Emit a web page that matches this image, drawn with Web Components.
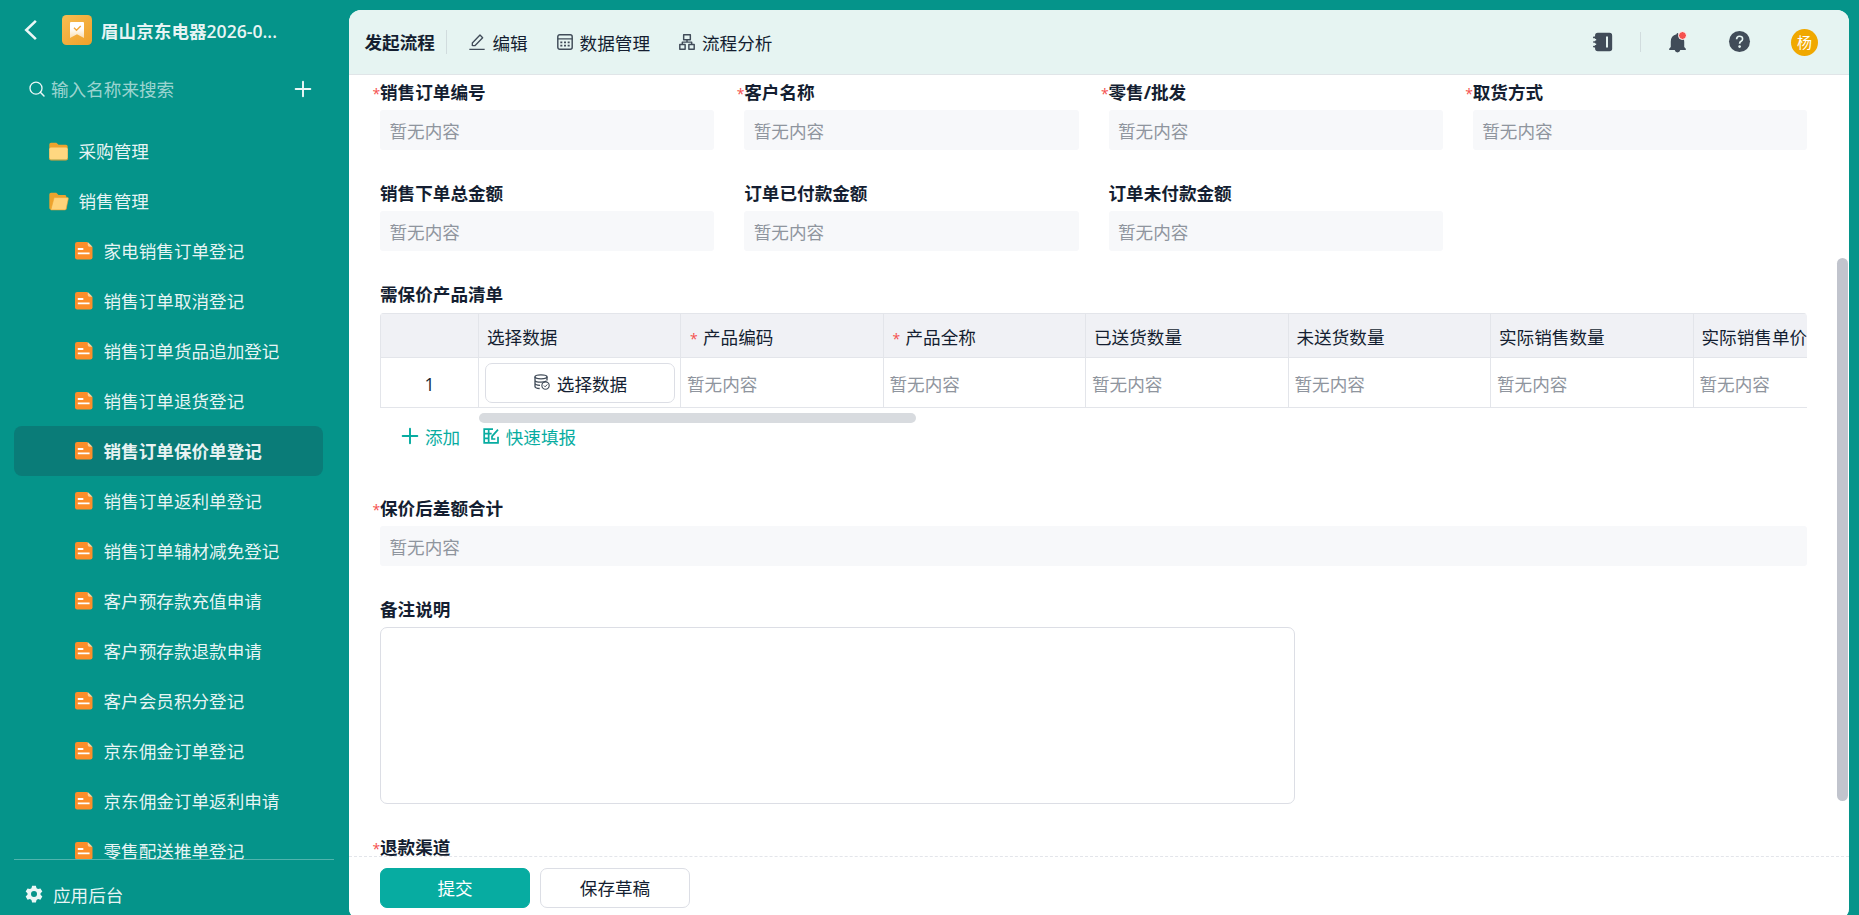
<!DOCTYPE html>
<html lang="zh-CN">
<head>
<meta charset="UTF-8">
<title>销售订单保价单登记</title>
<style>
  html, body { margin: 0; height: 100%; overflow: hidden; }
  body {
    background: #05948a;
    color: #141e31;
    font: 17.6px/24px "Open Sans", "Noto Sans CJK SC", sans-serif;
  }
</style>
</head>
<body>
<app-shell>
  <side-bar slot="side"></side-bar>
  <top-bar slot="top"></top-bar>
  <form-view slot="content"></form-view>
  <form-actions slot="footer"></form-actions>
</app-shell>

<script>
const ICONS = {
  back: `<path d="M19.500 2 9 12l10.500 10" fill="none" stroke="currentColor" stroke-width="2.8"/>`,
  app: `<defs><linearGradient id="g" x1="0" y1="0" x2="1" y2="1"><stop stop-color="#f8bd51"/><stop offset="1" stop-color="#efa02a"/></linearGradient><linearGradient id="w" x1="0" y1="0" x2="0" y2="1"><stop offset=".4" stop-color="#fff"/><stop offset="1" stop-color="#fff" stop-opacity=".6"/></linearGradient></defs>
    <rect width="24" height="24" rx="3.6" fill="url(#g)"/><path d="M7.2 5.6h9.6q.8 0 .8.8v12l-5.6-3-5.6 3v-12q0-.8.8-.8z" fill="url(#w)"/><path d="m9.6 10.2 2 2 3.4-3.4" fill="none" stroke="#f2a83a" stroke-width="1.1"/>`,
  search: `<circle cx="10.5" cy="10.7" r="9" fill="none" stroke="currentColor" stroke-width="2"/><path d="m17 17 5.5 5.5" stroke="currentColor" stroke-width="2.2" stroke-linecap="round"/>`,
  plus: `<path d="M12 1v22M1 12h22" fill="none" stroke="currentColor" stroke-width="2.9" stroke-linecap="round"/>`,
  folder: `<path d="M1.500 4Q1.500 2 3.500 2h6l2.600 2.200h8.400Q22.500 4.200 22.500 6.500V19h-21z" fill="#eda32e"/><rect x="1.500" y="7.500" width="21" height="14" rx="1.800" fill="#ffd780"/><path d="M1.500 19.500q0 2.300 2 2.300h17q2 0 2-2.300" fill="none" stroke="#eda32e" stroke-width="1"/>`,
  folderOpen: `<path d="M1.500 4Q1.500 2 3.500 2h6l2.500 2.600h7.500Q21 4.600 21 6.500V21H3Q1.500 21 1.500 19.500z" fill="#eda32e"/><path d="M7 7.500h15.200q1.300 0 1 1.300l-2.400 11.500q-.3 1.300-1.600 1.300H3.200z" fill="#ffd37a" stroke="#eda32e" stroke-width=".7"/>`,
  file: `<path d="M3 0h13.500L24 7.500V21q0 3-3 3H3q-3 0-3-3V3Q0 0 3 0z" fill="#fc8e2a"/><path d="M17.500 0 24 6.500h-4q-2.500 0-2.500-2.500z" fill="#ffcf96"/><path d="M3.800 9.600h7.600M3.800 15.600h16.200" stroke="#fff" stroke-width="2.700"/>`,
  gear: `<path fill-rule="evenodd" d="M9.500 1h5l.9 3.300 2 1.100 3.200-.9 2.500 4.300-2.400 2.300v2l2.400 2.300-2.500 4.300-3.200-.9-2 1.100-.9 3.300h-5l-.9-3.300-2-1.100-3.200.9L.9 15.400l2.400-2.300v-2L.9 8.800l2.500-4.300 3.200.9 2-1.100zM12 8a4 4 0 1 0 0 8 4 4 0 0 0 0-8z" fill="currentColor"/>`,
  edit: `<path d="M5 18v-4.500L16.500 1.500l4 4L8.800 17.500H5M.5 23h23" fill="none" stroke="currentColor" stroke-width="2" stroke-linejoin="round"/>`,
  table: `<rect x="1.200" y="1.200" width="21.600" height="21.600" rx="3" fill="none" stroke="currentColor" stroke-width="2.200"/><path d="M1 7.300h22" stroke="currentColor" stroke-width="2"/><path d="M5 12.500h3m2.500 0h3m2.500 0h3M5 17.500h3m2.500 0h3m2.500 0h3" stroke="currentColor" stroke-width="2.500"/>`,
  flow: `<path d="M7 1.200h10v7.300H7zM1.200 15.700h8v7.100h-8zM14.800 15.700h8v7.100h-8zM12 8.500v3.700M5 15.700v-3.500h14v3.500" fill="none" stroke="currentColor" stroke-width="2.200" stroke-linejoin="round"/>`,
  notebook: `<rect x="2.500" y="1" width="20.500" height="22" rx="3.200" fill="currentColor"/><path d="M0 9.200h3.800M0 14.800h3.800" stroke="#e6f4f2" stroke-width="1.800"/><path d="M1 6.500h4M1 12h4M1 17.500h4" stroke="currentColor" stroke-width="2" stroke-linecap="round"/><path d="M16.800 5.500v13" stroke="#e6f4f2" stroke-width="2.400"/>`,
  bell: `<path d="M12 0q1 0 1.200 1.600Q20.500 3 20.500 11v6.800L22.500 20v1.500h-21V20l2-2.200V11Q3.500 3 10.800 1.600 11 0 12 0zM8.500 21.500h7Q15 24.500 12 24.500t-3.500-3z" fill="currentColor"/>`,
  help: `<circle cx="12" cy="12" r="12" fill="currentColor"/><path d="M8.700 9.500q0-3.500 3.400-3.500t3.400 3q0 1.700-1.700 2.700-1.700 1-1.700 2.800" fill="none" stroke="#e6f4f2" stroke-width="1.900"/><circle cx="12.100" cy="17.800" r="1.500" fill="#e6f4f2"/>`,
  database: `<ellipse cx="10.500" cy="4.200" rx="9" ry="3" fill="none" stroke="currentColor" stroke-width="2"/><path d="M1.500 4.200v14.500q0 2.600 7 3.100M19.500 4.200v5.500M1.500 9.200q0 2.800 9 3 5 0 8-1.500M1.500 14q0 2.600 7.500 3" fill="none" stroke="currentColor" stroke-width="2"/><circle cx="17.300" cy="17.300" r="5.500" fill="none" stroke="currentColor" stroke-width="1.700"/><path d="m14.800 17.300 1.900 1.900 3.300-3.500" fill="none" stroke="currentColor" stroke-width="1.500"/>`,
  quick: `<path d="M15 1.800H1.800v20.600H22.500V13M1.800 8.500H13M1.800 15.500H8.500M8.500 1.800V22" fill="none" stroke="currentColor" stroke-width="2.600"/><path d="M22.500 2.500 13.500 12.500v4h5" fill="none" stroke="currentColor" stroke-width="2.600"/>`
};

class UiIcon extends HTMLElement {
  constructor() {
    super();
    this.attachShadow({ mode: "open" });
  }

  connectedCallback() {
    const size = this.getAttribute("size") || 16;
    this.shadowRoot.innerHTML = `
      <style>
        :host { display: block; flex: none; width: ${size}px; height: ${size}px; }
        svg { display: block; width: 100%; height: 100%; overflow: visible; }
      </style>
      <svg viewBox="0 0 24 24">${ICONS[this.getAttribute("name")]}</svg>
    `;
  }
}

class AppShell extends HTMLElement {
  constructor() {
    super();
    this.attachShadow({ mode: "open" });
    this.shadowRoot.innerHTML = `
      <style>
        :host { display: flex; height: 915px; overflow: hidden; }
        aside { width: 349px; flex: none; }
        main { display: flex; flex-direction: column; width: 1500px; height: 910px; margin-top: 10px; border-radius: 12px; overflow: hidden; background: #fff; }
        .content { flex: 1; min-height: 0; overflow: hidden; }
      </style>
      <aside><slot name="side"></slot></aside>
      <main>
        <slot name="top"></slot>
        <div class="content"><slot name="content"></slot></div>
        <slot name="footer"></slot>
      </main>
    `;
  }
}

class NavItem extends HTMLElement {
  constructor() {
    super();
    this.attachShadow({ mode: "open" });
  }

  connectedCallback() {
    const icon = this.getAttribute("icon");
    const isFile = icon === "file";
    this.shadowRoot.innerHTML = `
      <style>
        :host { display: flex; align-items: center; height: 50px; box-sizing: border-box; padding-left: ${isFile ? 61 : 34}px; border-radius: 8px; color: rgba(255,255,255,.92); }
        :host([active]) { background: #0a7c78; font-weight: 700; }
        span { margin-left: ${isFile ? 11 : 9.5}px; white-space: nowrap; }
      </style>
      <ui-icon name="${icon}" size="${isFile ? 17.5 : 21}"></ui-icon>
      <span><slot></slot></span>
    `;
  }
}

class SideBar extends HTMLElement {
  constructor() {
    super();
    this.attachShadow({ mode: "open" });
    this.state = {
      activo: "销售订单保价单登记",
      items: [
        "家电销售订单登记", "销售订单取消登记", "销售订单货品追加登记", "销售订单退货登记",
        "销售订单保价单登记", "销售订单返利单登记", "销售订单辅材减免登记", "客户预存款充值申请",
        "客户预存款退款申请", "客户会员积分登记", "京东佣金订单登记", "京东佣金订单返利申请", "零售配送推单登记",
      ],
    };
  }

  connectedCallback() {
    this.shadowRoot.innerHTML = `
      <style>
        :host { display: flex; flex-direction: column; height: 915px; color: rgba(255,255,255,.92); }
        header { display: flex; align-items: center; height: 60px; padding-left: 18px; }
        header ui-icon + ui-icon { margin-left: 22px; }
        h1 { margin: 2px 0 0 9px; font-size: 17.6px; font-weight: 600; white-space: nowrap; }
        .search { display: flex; align-items: center; height: 58px; padding: 0 38px 0 29px; }
        .search span { flex: 1; margin-left: 6px; color: rgba(255,255,255,.62); }
        nav { height: 733px; margin: 8px 26px 0 14px; overflow: hidden; }
        footer { display: flex; align-items: center; height: 55px; margin: 0 15px 0 14px; padding: 14px 0 0 11px; box-sizing: border-box; border-top: 1px solid #50b4ad; }
        footer span { margin: 1px 0 0 10px; }
      </style>
      <header>
        <ui-icon name="back" size="22"></ui-icon>
        <ui-icon name="app" size="30"></ui-icon>
        <h1>眉山京东电器2026-0...</h1>
      </header>
      <div class="search">
        <ui-icon name="search" size="16"></ui-icon>
        <span>输入名称来搜索</span>
        <ui-icon name="plus" size="16"></ui-icon>
      </div>
      <nav>
        <nav-item icon="folder">采购管理</nav-item>
        <nav-item icon="folderOpen">销售管理</nav-item>
        ${this.state.items.map(t => `<nav-item icon="file" ${t === this.state.activo ? "active" : ""}>${t}</nav-item>`).join("")}
      </nav>
      <footer>
        <ui-icon name="gear" size="18"></ui-icon>
        <span>应用后台</span>
      </footer>
    `;
  }
}

class TopBar extends HTMLElement {
  constructor() {
    super();
    this.attachShadow({ mode: "open" });
    this.shadowRoot.innerHTML = `
      <style>
        :host { display: flex; align-items: center; flex: none; height: 65px; box-sizing: border-box; padding: 0 31px 0 15.500px; background: #e6f4f2; border-bottom: 1px solid #e0e5e8; }
        .sep { width: 1px; height: 24px; margin: 0 22.500px 0 11px; background: #d1dcde; }
        .tool { display: flex; align-items: center; margin-right: 29px; }
        .tool ui-icon { margin-top: -1px; }
        .tool span { margin: 1px 0 0 7px; }
        ui-icon { color: #414c59; }
        .right { display: flex; align-items: center; margin-left: auto; }
        .right .sep { height: 20px; margin: 0 27px; }
        .bell { position: relative; margin-right: 42px; }
        .bell::after { content: ""; position: absolute; top: -2px; right: 0; width: 7px; height: 7px; border: 1px solid #fff; border-radius: 50%; background: #f5504e; }
        .right > ui-icon { margin-top: -1px; }
        .avatar { width: 27px; height: 27px; margin-left: 41px; border-radius: 50%; background: #f0a800; color: #fff; font-size: 15px; line-height: 26px; text-align: center; }
      </style>
      <b>发起流程</b>
      <div class="sep"></div>
      <div class="tool"><ui-icon name="edit"></ui-icon><span>编辑</span></div>
      <div class="tool"><ui-icon name="table"></ui-icon><span>数据管理</span></div>
      <div class="tool"><ui-icon name="flow"></ui-icon><span>流程分析</span></div>
      <div class="right">
        <ui-icon name="notebook" size="20"></ui-icon>
        <div class="sep"></div>
        <div class="bell"><ui-icon name="bell" size="19"></ui-icon></div>
        <ui-icon name="help" size="21"></ui-icon>
        <div class="avatar">杨</div>
      </div>
    `;
  }
}

class FormField extends HTMLElement {
  constructor() {
    super();
    this.attachShadow({ mode: "open" });
  }

  connectedCallback() {
    this.shadowRoot.innerHTML = `
      <style>
        :host { display: block; }
        label { display: block; height: 36px; line-height: 37px; font-weight: 700; }
        :host([required]) label::before { content: "*"; display: inline-block; width: 7.500px; margin-left: -7.500px; color: #f5504e; font-weight: 400; font-size: 14px; line-height: 20px; }
        .empty { height: 40px; box-sizing: border-box; padding-left: 9.500px; border-radius: 3px; background: #f7f8fa; color: #8f959e; line-height: 42px; }
      </style>
      <label>${this.getAttribute("label")}</label>
      <slot><div class="empty">暂无内容</div></slot>
    `;
  }
}

class SubTable extends HTMLElement {
  constructor() {
    super();
    this.attachShadow({ mode: "open" });
    this.state = {
      columnas: [
        { t: "产品编码", req: true }, { t: "产品全称", req: true }, { t: "已送货数量" },
        { t: "未送货数量" }, { t: "实际销售数量" }, { t: "实际销售单价" },
      ],
    };
  }

  connectedCallback() {
    const cols = this.state.columnas;
    this.shadowRoot.innerHTML = `
      <style>
        :host { display: block; margin-top: 1px; }
        .clip { overflow: hidden; border-radius: 4px 4px 0 0; }
        .row { display: grid; grid-template-columns: 98px 202px repeat(6, 202.500px); width: max-content; box-sizing: border-box; border-left: 1px solid #e3e5ea; }
        .row > div { box-sizing: border-box; border-right: 1px solid #e3e5ea; border-bottom: 1px solid #e3e5ea; white-space: nowrap; }
        .head > div { height: 45px; padding-left: 8px; background: #f0f1f5; border-top: 1px solid #e3e5ea; line-height: 46px; }
        .head i { display: inline-block; width: 8px; margin: 0 5px 0 1px; color: #f5504e; font-style: normal; font-size: 14px; line-height: 20px; }
        .body > div { height: 50px; padding-left: 6px; color: #8f959e; line-height: 52px; }
        .body .num { padding: 0; color: #141e31; text-align: center; }
        .pick { display: flex; align-items: center; justify-content: center; width: 190px; height: 40px; margin-top: 5px; box-sizing: border-box; border: 1px solid #dcdee5; border-radius: 7px; color: #141e31; line-height: 24px; }
        .pick ui-icon { color: #414c59; margin: -2px 7px 0 1px; }
        .pick span { padding-top: 2px; }
        .bar { width: 437px; height: 10px; margin: 5px 0 0 99px; border-radius: 5px; background: #d8dbdf; }
        .links { display: flex; align-items: center; height: 27px; padding-left: 22px; color: #07aca1; }
        .links span { margin: 0 22.500px 0 7px; }
        .links ui-icon { margin-top: -1px; }
      </style>
      <div class="clip">
        <div class="row head">
          <div></div><div>选择数据</div>
          ${cols.map(c => `<div>${c.req ? "<i>*</i>" : ""}${c.t}</div>`).join("")}
        </div>
        <div class="row body">
          <div class="num">1</div>
          <div><div class="pick"><ui-icon name="database"></ui-icon><span>选择数据</span></div></div>
          ${cols.map(() => `<div>暂无内容</div>`).join("")}
        </div>
      </div>
      <div class="bar"></div>
      <div class="links">
        <ui-icon name="plus"></ui-icon><span>添加</span>
        <ui-icon name="quick"></ui-icon><span>快速填报</span>
      </div>
    `;
  }
}

class FormView extends HTMLElement {
  constructor() {
    super();
    this.attachShadow({ mode: "open" });
    this.shadowRoot.innerHTML = `
      <style>
        :host { display: flex; height: 100%; justify-content: space-between; }
        .form { display: grid; grid-template-columns: repeat(4, minmax(0, 1fr)); gap: 25px 30px; align-content: start; width: 1427px; margin: -1px 0 0 31px; }
        .full { grid-column: 1 / -1; }
        .list { height: 189px; }
        .area { width: 915px; height: 177px; box-sizing: border-box; border: 1px solid #dcdee5; border-radius: 7px; }
        .scroll { width: 11px; height: 543px; margin: 183px 1px 0 0; border-radius: 6px; background: #c1c4cd; }
      </style>
      <div class="form">
        <form-field label="销售订单编号" required></form-field>
        <form-field label="客户名称" required></form-field>
        <form-field label="零售/批发" required></form-field>
        <form-field label="取货方式" required></form-field>
        <form-field label="销售下单总金额"></form-field>
        <form-field label="订单已付款金额"></form-field>
        <form-field label="订单未付款金额"></form-field>
        <form-field class="full list" label="需保价产品清单"><sub-table></sub-table></form-field>
        <form-field class="full" label="保价后差额合计" required></form-field>
        <form-field class="full" label="备注说明"><div class="area"></div></form-field>
        <form-field class="full" label="退款渠道" required><span></span></form-field>
      </div>
      <div class="scroll"></div>
    `;
  }
}

class FormActions extends HTMLElement {
  constructor() {
    super();
    this.attachShadow({ mode: "open" });
    this.shadowRoot.innerHTML = `
      <style>
        :host { display: flex; flex: none; gap: 10px; height: 64px; box-sizing: border-box; padding: 11px 0 0 31px; border-top: 1px dashed #e3e5ea; background: #fff; }
        button { width: 150px; height: 40px; padding: 0; border: 1px solid #dcdee5; border-radius: 7px; background: #fff; color: inherit; font: inherit; }
        .primary { border-color: #07aca1; background: #07aca1; color: #fff; }
      </style>
      <button class="primary">提交</button>
      <button>保存草稿</button>
    `;
  }
}

customElements.define("ui-icon", UiIcon);
customElements.define("nav-item", NavItem);
customElements.define("side-bar", SideBar);
customElements.define("top-bar", TopBar);
customElements.define("form-field", FormField);
customElements.define("sub-table", SubTable);
customElements.define("form-view", FormView);
customElements.define("form-actions", FormActions);
customElements.define("app-shell", AppShell);
</script>
</body>
</html>
